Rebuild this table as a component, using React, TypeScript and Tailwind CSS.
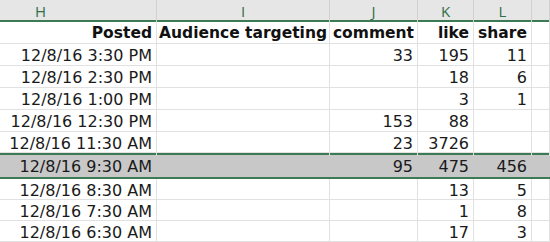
import React from 'react';

type Row = {
  posted: string;
  comment?: string;
  like?: string;
  share?: string;
  selected?: boolean;
};

const rows: Row[] = [
  { posted: '12/8/16 3:30 PM', comment: '33', like: '195', share: '11' },
  { posted: '12/8/16 2:30 PM', like: '18', share: '6' },
  { posted: '12/8/16 1:00 PM', like: '3', share: '1' },
  { posted: '12/8/16 12:30 PM', comment: '153', like: '88' },
  { posted: '12/8/16 11:30 AM', comment: '23', like: '3726' },
  { posted: '12/8/16 9:30 AM', comment: '95', like: '475', share: '456', selected: true },
  { posted: '12/8/16 8:30 AM', like: '13', share: '5' },
  { posted: '12/8/16 7:30 AM', like: '1', share: '8' },
  { posted: '12/8/16 6:30 AM', like: '17', share: '3' },
];

const cols = 'grid grid-cols-[157px_173px_88px_56px_58px_18px]';
const cell = 'flex items-center border-r border-[#e1e1e1] px-[4px] whitespace-nowrap';
const selCell = 'flex items-center border-r border-transparent px-[4px] whitespace-nowrap';

const App: React.FC = () => {
  return (
    <div className="w-[550px] h-[242px] overflow-hidden bg-white text-[16px] text-[#1a1a1a] font-['DejaVu_Sans',sans-serif]">
      {/* Column letters (H is scrolled partly out of view) */}
      <div className={`${cols} h-[22px] bg-[#e6e6e6] border-b-2 border-[#3b7a55] font-['Open_Sans',sans-serif] text-[15px] text-[#2e6e48]`}>
        <div className="flex items-center justify-start pl-[35px] border-r border-[#d2d2d2]">H</div>
        {['I', 'J', 'K', 'L', ''].map((l, i) => (
          <div key={i} className="flex items-center justify-center border-r border-[#d2d2d2]">
            {l}
          </div>
        ))}
      </div>

      {/* Header row */}
      <div className={`${cols} h-[22px] border-b border-[#e1e1e1] font-bold text-[15.5px] text-[#111]`}>
        <div className={`${cell} justify-end`}>Posted</div>
        <div className={`${cell} justify-start pl-[2px]`}>Audience targeting</div>
        <div className={`${cell} justify-end pr-[3px]`}>comment</div>
        <div className={`${cell} justify-end`}>like</div>
        <div className={`${cell} justify-end`}>share</div>
        <div className={cell} />
      </div>

      {rows.map((r, i) => {
        const h = r.selected
          ? 'h-[26px] bg-[#c8c8c8] border-y-2 border-[#3b7a55]'
          : i >= 4
            ? 'h-[21px] border-b border-[#e1e1e1]'
            : 'h-[22px] border-b border-[#e1e1e1]';
        const c = r.selected ? selCell : cell;
        return (
          <div key={i} className={`${cols} ${h}`}>
            <div className={`${c} justify-end`}>{r.posted}</div>
            <div className={c} />
            <div className={`${c} justify-end`}>{r.comment}</div>
            <div className={`${c} justify-end`}>{r.like}</div>
            <div className={`${c} justify-end`}>{r.share}</div>
            <div className={c} />
          </div>
        );
      })}
    </div>
  );
};

export default App;
